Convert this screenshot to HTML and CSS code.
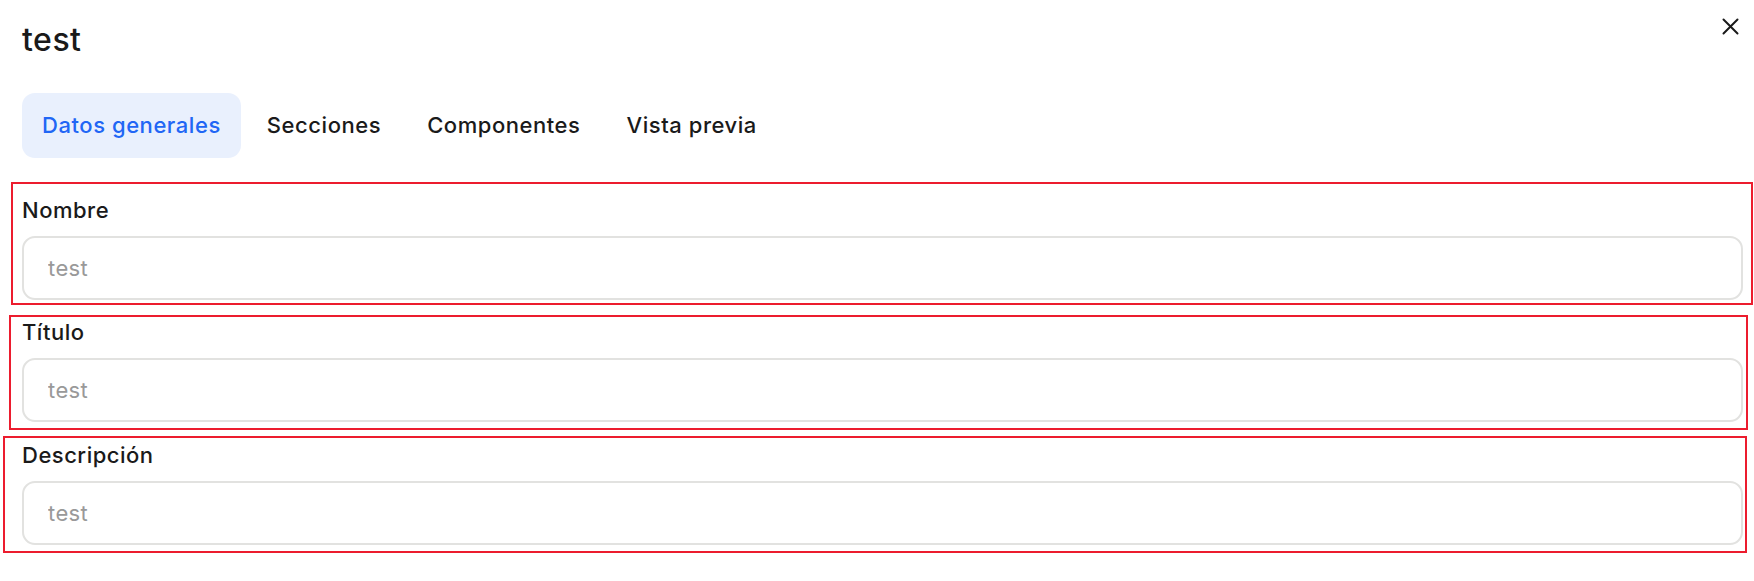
FILE: index.html
```html
<!DOCTYPE html>
<html lang="es">
<head>
    <meta charset="UTF-8">
    <meta name="viewport" content="width=device-width, initial-scale=1.0">
    <title>test</title>
    <link rel="stylesheet" href="styles.css">
</head>
<body>
<div class="header">
    <h1 class="title">test</h1>
    <button class="close" type="button" aria-label="Cerrar">
        <svg width="17" height="17" viewBox="0 0 17 17">
            <path d="M1.5 1.5 L15.5 15.5 M15.5 1.5 L1.5 15.5" stroke="#1a1a1a" stroke-width="2" stroke-linecap="round" fill="none"/>
        </svg>
    </button>
</div>

<nav class="tabs">
    <button class="tab active" type="button">Datos generales</button>
    <button class="tab" type="button">Secciones</button>
    <button class="tab" type="button">Componentes</button>
    <button class="tab" type="button">Vista previa</button>
</nav>

<form class="form">
    <div class="field field-nombre">
        <label for="nombre">Nombre</label>
        <input type="text" id="nombre" placeholder="test">
    </div>

    <div class="field field-titulo">
        <label for="titulo">Título</label>
        <input type="text" id="titulo" placeholder="test">
    </div>

    <div class="field field-descripcion">
        <label for="descripcion">Descripción</label>
        <input type="text" id="descripcion" placeholder="test">
    </div>
</form>
</body>
</html>
```

FILE: styles.css
```css
body {
    font-family: Inter, "Noto Sans", sans-serif;
    margin: 0;
    padding: 0;
    background: #fff;
    color: #1a1a1a;
}

.header {
    display: flex;
    justify-content: space-between;
    align-items: flex-start;
    padding: 18px 15px 0 22px;
}

.title {
    margin: 2px 0 0;
    font-size: 32px;
    line-height: 40px;
    font-weight: 500;
    letter-spacing: 0.5px;
}

.close {
    display: flex;
    padding: 0;
    border: none;
    background: none;
    cursor: pointer;
}

.tabs {
    display: flex;
    gap: 6px;
    margin: 33px 0 0 22px;
}

.tab {
    padding: 19px 20px 20px;
    font-family: inherit;
    font-size: 22px;
    line-height: 26px;
    font-weight: 500;
    letter-spacing: 0.55px;
    color: #1a1a1a;
    background: none;
    border: none;
    border-radius: 13px;
    cursor: pointer;
}

.tab.active {
    color: #2166f5;
    background: #e9f0fd;
}

.form {
    margin-top: 24px;
}

.field {
    display: flex;
    flex-direction: column;
    border: 2px solid #ec1c2e;
}

.field label {
    font-size: 22px;
    line-height: 26px;
    font-weight: 500;
    letter-spacing: 0.5px;
    margin-bottom: 13px;
}

.field input {
    box-sizing: border-box;
    height: 64px;
    padding: 0 24px;
    font-family: inherit;
    font-size: 22px;
    letter-spacing: 0.4px;
    color: #1a1a1a;
    border: 2px solid #e2e2e0;
    border-radius: 13px;
    background: #fff;
    outline: none;
}

.field input::placeholder {
    color: #999;
}

.field-nombre {
    margin: 0 1px 0 11px;
    padding: 13px 8px 3px 9px;
}

.field-titulo {
    margin: 10px 6px 0 9px;
    padding: 2px 3px 6px 11px;
}

.field-descripcion {
    margin: 6px 7px 0 3px;
    padding: 4px 2px 6px 17px;
}
```
